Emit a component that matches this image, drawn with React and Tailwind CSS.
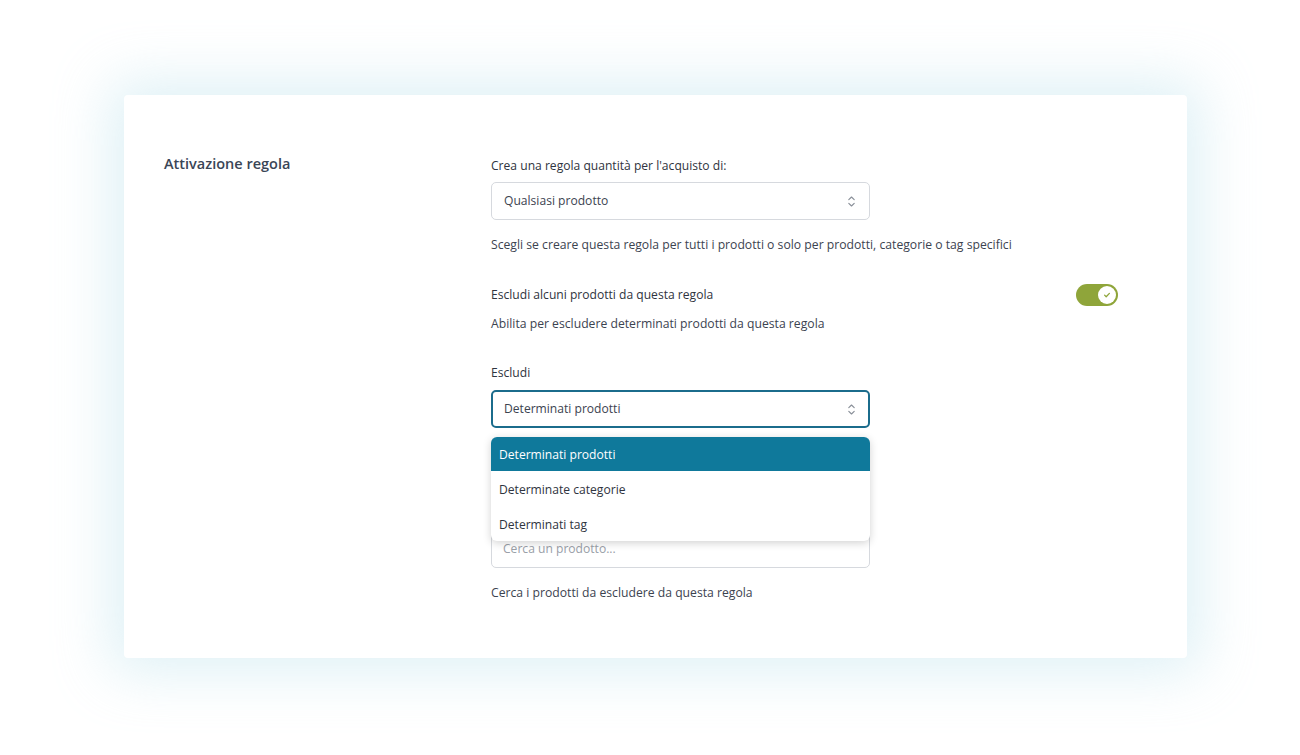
import { useState } from "react";

const OPTIONS = ["Determinati prodotti", "Determinate categorie", "Determinati tag"];

function Chevrons() {
  return (
    <svg viewBox="0 0 10 14" className="h-[13px] w-[9px]" fill="none" stroke="#8a9099" strokeWidth="1.3" strokeLinecap="round" strokeLinejoin="round">
      <path d="M2 5l3-3 3 3" />
      <path d="M2 9l3 3 3-3" />
    </svg>
  );
}

function Toggle({ on }) {
  return (
    <div className={`flex h-[22px] w-[42px] items-center rounded-full p-[2px] ${on ? "justify-end bg-[#8fa53a]" : "justify-start bg-gray-300"}`}>
      <div className="flex h-[18px] w-[18px] items-center justify-center rounded-full bg-white">
        <svg viewBox="0 0 10 10" className="h-[8px] w-[8px]" fill="none" stroke="#8fa53a" strokeWidth="1.6" strokeLinecap="round" strokeLinejoin="round">
          <path d="M2 5.2l2 2 4-4.2" />
        </svg>
      </div>
    </div>
  );
}

export default function App() {
  const [exclude, setExclude] = useState(OPTIONS[0]);

  return (
    <div
      className="flex min-h-[755px] w-full bg-white pl-[124px] pt-[95px] text-[12.1px] text-[#2f3440]"
      style={{ fontFamily: '"Open Sans", "Noto Sans", sans-serif' }}
    >
      <div className="flex h-[563px] w-[1063px] rounded-[4px] bg-white pl-[40px] pr-[69px] pt-[56px] shadow-[0_0_55px_14px_rgba(185,225,235,0.45)]">
        <div className="w-[327px] shrink-0">
          <h2 className="pt-[1px] text-[14.5px] font-semibold leading-[24px] text-[#3a4556]">Attivazione regola</h2>
        </div>

        <div className="flex-1">
          <p className="pt-[2px] leading-[26px]">Crea una regola quantità per l'acquisto di:</p>
          <div className="mt-[3px] flex h-[38px] w-[379px] items-center justify-between rounded-[5px] border border-[#d6d9de] pl-[12px] pr-[13px] text-[#3c4350]">
            <span className="pt-[1px]">Qualsiasi prodotto</span>
            <Chevrons />
          </div>
          <p className="mt-[13px] text-[12.2px] leading-[23px] text-[#3c4350]">
            Scegli se creare questa regola per tutti i prodotti o solo per prodotti, categorie o tag specifici
          </p>

          <div className="mt-[27px] flex items-center justify-between">
            <p className="pt-[1px] leading-[22px]">Escludi alcuni prodotti da questa regola</p>
            <Toggle on />
          </div>
          <p className="mt-[7px] text-[12.2px] leading-[22px] text-[#3c4350]">
            Abilita per escludere determinati prodotti da questa regola
          </p>

          <p className="mt-[26px] pt-[1px] leading-[22px]">Escludi</p>
          <div className="relative mt-[6px] w-[379px]">
            <div className="flex h-[38px] items-center justify-between rounded-[5px] border-2 border-[#1b6c8c] pl-[11px] pr-[12px] text-[#3c4350]">
              <span className="pt-[1px]">{exclude}</span>
              <Chevrons />
            </div>

            <ul className="absolute left-0 top-[47px] z-10 w-[379px] overflow-hidden rounded-[6px] bg-white shadow-[0_2px_8px_rgba(0,0,0,0.18)]">
              {OPTIONS.map((o, i) => (
                <li
                  key={o}
                  onClick={() => setExclude(o)}
                  className={`flex cursor-pointer items-center px-[8px] pt-[3px] ${i === 0 ? "h-[34px] bg-[#0f799b] text-white" : "h-[35px] text-[#2f3440]"}`}
                >
                  {o}
                </li>
              ))}
            </ul>
          </div>
          <p className="mt-[13px] w-[400px] text-[12.2px] leading-[23px] text-[#3c4350]">
            Scegli il tipo di elementi da escludere: prodotti specifici
          </p>

          <p className="mt-[38px] leading-[22px]">Prodotti</p>
          <div className="mt-[6px] flex h-[38px] w-[379px] items-center rounded-[5px] border border-[#d6d9de] pl-[11px] pt-[1px] text-[#9aa0a8]">
            Cerca un prodotto...
          </div>
          <p className="mt-[13px] text-[12.2px] leading-[23px] text-[#3c4350]">
            Cerca i prodotti da escludere da questa regola
          </p>
        </div>
      </div>
    </div>
  );
}
